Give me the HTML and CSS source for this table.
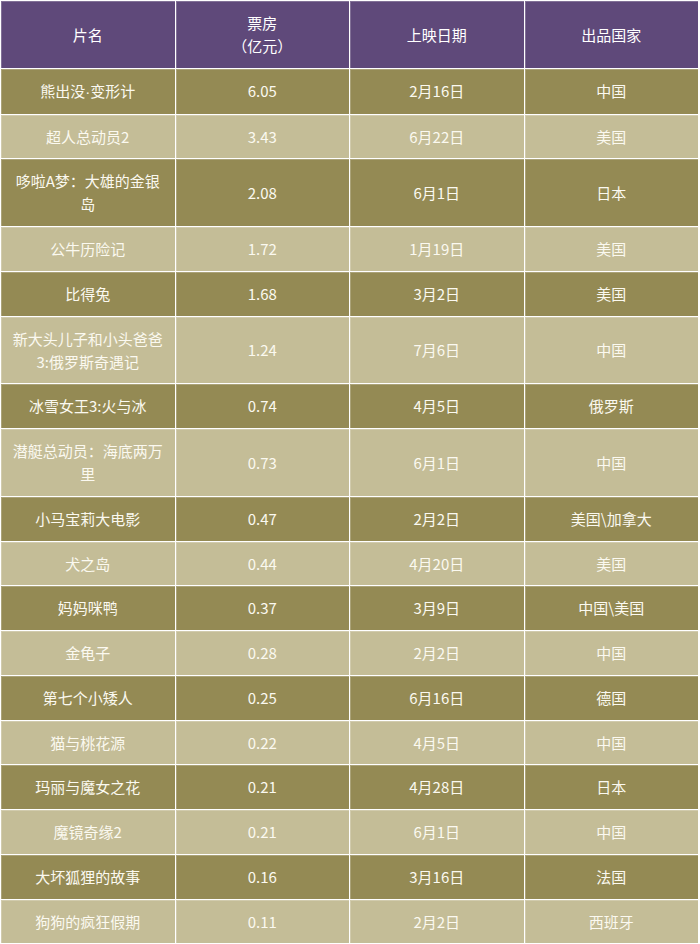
FILE: index.html
```html
<!DOCTYPE html>
<html lang="zh-CN">
<head>
<meta charset="utf-8">
<title>票房</title>
<link rel="stylesheet" href="styles.css">
</head>
<body>
<table class="box-table">
  <colgroup><col class="c"><col class="c"><col class="c"><col class="c"></colgroup>
  <thead>
    <tr class="head"><th>片名</th><th>票房<br>（亿元）</th><th>上映日期</th><th>出品国家</th></tr>
  </thead>
  <tbody>
    <tr class="dark"><td>熊出没<span class="dot">·</span>变形计</td><td>6.05</td><td>2月16日</td><td>中国</td></tr>
    <tr class="light"><td>超人总动员2</td><td>3.43</td><td>6月22日</td><td>美国</td></tr>
    <tr class="dark"><td>哆啦A梦：大雄的金银岛</td><td>2.08</td><td>6月1日</td><td>日本</td></tr>
    <tr class="light"><td>公牛历险记</td><td>1.72</td><td>1月19日</td><td>美国</td></tr>
    <tr class="dark"><td>比得兔</td><td>1.68</td><td>3月2日</td><td>美国</td></tr>
    <tr class="light"><td>新大头儿子和小头爸爸3:俄罗斯奇遇记</td><td>1.24</td><td>7月6日</td><td>中国</td></tr>
    <tr class="dark"><td>冰雪女王3:火与冰</td><td>0.74</td><td>4月5日</td><td>俄罗斯</td></tr>
    <tr class="light"><td>潜艇总动员：海底两万里</td><td>0.73</td><td>6月1日</td><td>中国</td></tr>
    <tr class="dark"><td>小马宝莉大电影</td><td>0.47</td><td>2月2日</td><td>美国\加拿大</td></tr>
    <tr class="light"><td>犬之岛</td><td>0.44</td><td>4月20日</td><td>美国</td></tr>
    <tr class="dark"><td>妈妈咪鸭</td><td>0.37</td><td>3月9日</td><td>中国\美国</td></tr>
    <tr class="light"><td>金龟子</td><td>0.28</td><td>2月2日</td><td>中国</td></tr>
    <tr class="dark"><td>第七个小矮人</td><td>0.25</td><td>6月16日</td><td>德国</td></tr>
    <tr class="light"><td>猫与桃花源</td><td>0.22</td><td>4月5日</td><td>中国</td></tr>
    <tr class="dark"><td>玛丽与魔女之花</td><td>0.21</td><td>4月28日</td><td>日本</td></tr>
    <tr class="light"><td>魔镜奇缘2</td><td>0.21</td><td>6月1日</td><td>中国</td></tr>
    <tr class="dark"><td>大坏狐狸的故事</td><td>0.16</td><td>3月16日</td><td>法国</td></tr>
    <tr class="light"><td>狗狗的疯狂假期</td><td>0.11</td><td>2月2日</td><td>西班牙</td></tr>
  </tbody>
</table>
</body>
</html>
```
FILE: styles.css
```css
html, body {
  margin: 0;
  padding: 0;
  background: #ffffff;
}

body {
  font-family: "Noto Sans CJK SC", "Noto Sans", sans-serif;
  font-size: 15px;
}

.box-table {
  width: 699px;
  border-collapse: collapse;
  table-layout: fixed;
  border: 1px solid #c9bfd6;
}

.box-table .c {
  width: 25%;
}

.box-table th,
.box-table td {
  border: 1px solid #ffffff;
  padding: 10px 10px 10.75px;
  line-height: 23px;
  text-align: center;
  vertical-align: middle;
  font-weight: normal;
  box-shadow: inset 1px 1px 0 rgba(255, 255, 255, 0.22);
}

.dot {
  font-family: "Liberation Sans", sans-serif;
}

.head th {
  background: #5f497a;
  color: #ffffff;
}

.dark td {
  background: #948a54;
  color: #fbf9f0;
}

.light td {
  background: #c4bd97;
  color: #fbf9f0;
}
```
